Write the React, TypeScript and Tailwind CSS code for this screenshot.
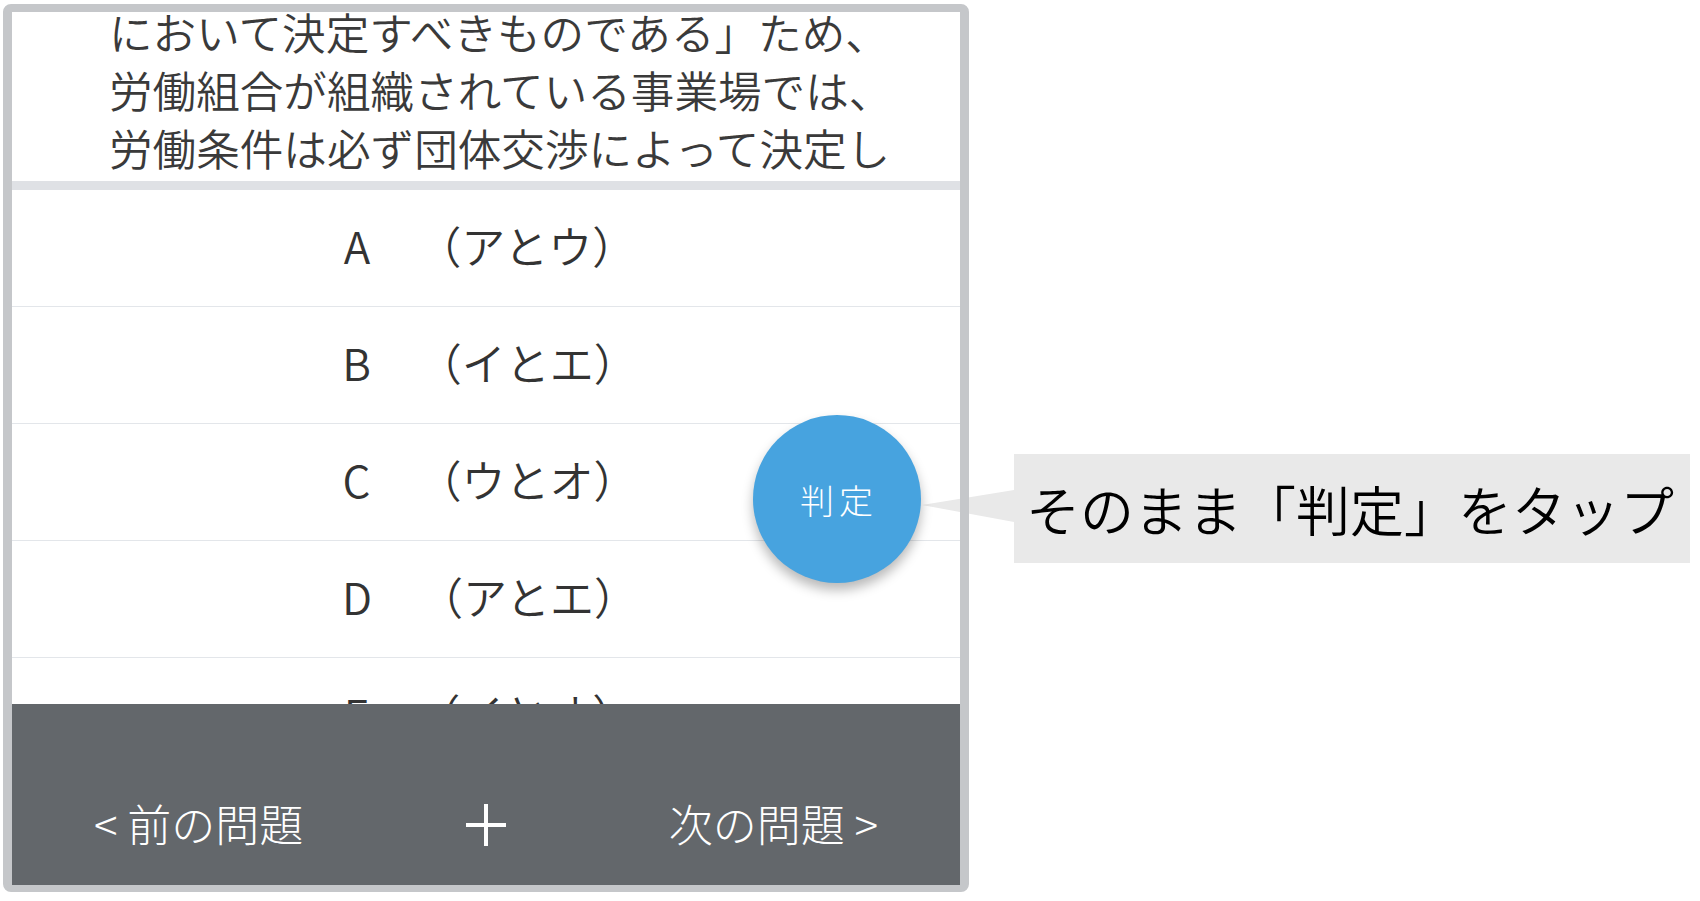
import { Fragment } from 'react'

const LINES = [
  'において決定すべきものである」ため、',
  '労働組合が組織されている事業場では、',
  '労働条件は必ず団体交渉によって決定し',
]

const CHOICES: [string, string][] = [
  ['A', '（アとウ）'],
  ['B', '（イとエ）'],
  ['C', '（ウとオ）'],
  ['D', '（アとエ）'],
  ['E', '（イとオ）'],
]

function PlusIcon() {
  return (
    <svg width="42" height="44" viewBox="0 0 42 44" className="block">
      <path d="M21 1v42M1 22h40" stroke="white" strokeWidth="4" />
    </svg>
  )
}

export default function App() {
  return (
    <div className="relative h-[901px] w-[1700px] overflow-hidden bg-white font-['Noto_Sans_CJK_JP','Noto_Sans',sans-serif] font-[350]">
      <div className="flex items-start pl-[3px] pt-[4px]">
        {/* phone frame */}
        <div className="relative h-[888px] w-[966px] pb-[7px] pl-[9px] pr-[9px] pt-[8px]">
          <div className="flex h-full flex-col overflow-hidden bg-white">
            <div className="flex h-[169px] shrink-0 flex-col justify-end overflow-hidden pb-[5px] pl-[97px] text-[43.6px] leading-[58px] text-[#3a3a3a]">
              {LINES.map((l) => (
                <div key={l} className="whitespace-nowrap">{l}</div>
              ))}
            </div>
            <div className="h-[9px] shrink-0 bg-[#dfe1e5]" />
            <div className="min-h-0 flex-1 overflow-hidden">
              {CHOICES.map(([k, v]) => (
                <div key={k} className="flex h-[117px] items-center justify-center border-b border-[#e3e6ea] pb-[6px] pl-[8px] text-[44px] text-[#333]">
                  <span>{k}</span>
                  <span className="ml-[47px]">{v}</span>
                </div>
              ))}
            </div>
            <div className="flex h-[181px] shrink-0 items-end justify-between bg-[#63676b] px-[82px] pb-[34px] text-[44px] font-light leading-[56px] text-white">
              <span className="whitespace-nowrap">&lt; 前の問題</span>
              <span className="mb-[4px]"><PlusIcon /></span>
              <span className="whitespace-nowrap">次の問題 &gt;</span>
            </div>
          </div>

          {/* 判定 button */}
          <button className="absolute left-[750px] top-[411px] z-20 flex h-[168px] w-[168px] items-center justify-center rounded-full bg-[#47a3df] pl-[4px] text-[34px] font-light tracking-[5px] text-white shadow-[0_7px_12px_rgba(0,0,0,0.28)]">
            判定
          </button>

          {/* frame border on top of everything that crosses it */}
          <div className="pointer-events-none absolute inset-0 z-30 rounded-[8px] border-b-[7px] border-l-[9px] border-r-[9px] border-t-[8px] border-[#c5c7ca]" />
        </div>

        {/* callout */}
        <div className="relative z-10 ml-[45px] mt-[450px] flex h-[109px] w-[676px] items-center bg-[#e9e9e9] pl-[12px] text-[54px] text-black">
          <svg width="92" height="32" viewBox="0 0 92 32" className="absolute right-full top-[36px]">
            <polygon points="92,0 0,15 92,32" fill="#e9e9e9" />
          </svg>
          <Fragment>そのまま「判定」をタップ</Fragment>
        </div>
      </div>
    </div>
  )
}
